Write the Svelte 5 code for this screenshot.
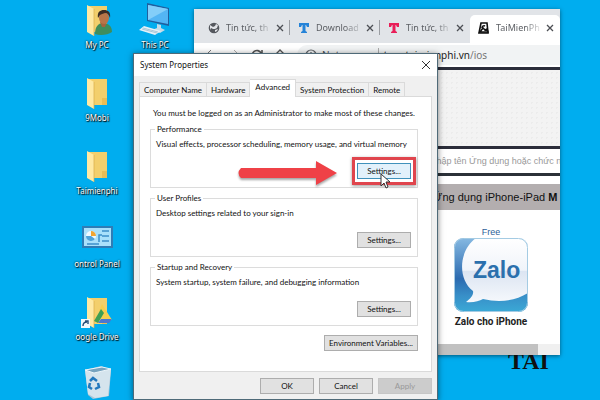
<script lang="ts">
  type Shortcut = { label: string; icon: string };

  const columns: Shortcut[][] = [
    [
      { label: 'My PC', icon: 'user' },
      { label: '9Mobi', icon: 'folder' },
      { label: 'Taimienphi', icon: 'folder' },
      { label: 'ontrol Panel', icon: 'control' },
      { label: 'oogle Drive', icon: 'drive' },
      { label: '', icon: 'bin' },
    ],
    [{ label: 'This PC', icon: 'monitor' }],
  ];

  const pages = [
    { title: 'Tin tức, th', icon: 'globe' },
    { title: 'Download', icon: 'blue' },
    { title: 'Tin tức, th', icon: 'pink' },
    { title: 'TaiMienPh', icon: 'site' },
  ];

  const tabs = ['Computer Name', 'Hardware', 'Advanced', 'System Protection', 'Remote'];

  const groups = [
    { title: 'Performance', text: 'Visual effects, processor scheduling, memory usage, and virtual memory' },
    { title: 'User Profiles', text: 'Desktop settings related to your sign-in' },
    { title: 'Startup and Recovery', text: 'System startup, system failure, and debugging information' },
  ];

  let activeTab = $state('Advanced');
  let activePage = $state(3);
</script>

{#snippet folder()}
  <path d="M10 3h20v26H10z" fill="#f3cf6c" />
  <path d="M25 22h5v7h-5z" fill="#e9bd55" />
  <path d="M10 2l7 4v27l-7-4z" fill="#ffe9a3" />
  <path d="M17 6v27" stroke="#d9ac48" stroke-width=".7" />
{/snippet}

<div class="desktop">
  <div class="shortcuts">
    {#each columns as column}
      <div class="shortcuts__column">
        {#each column as item}
          <a class="shortcut" href="#top" aria-label={item.label || 'Recycle Bin'}>
            <svg width="40" height="36" viewBox="0 0 40 36" fill="none" aria-hidden="true">
              {#if item.icon === 'user'}
                {@render folder()}
                <path d="M18 31c0-7 3-11 8-11s9 3 9 9c-4 3-12 4-17 2z" fill="#3f8d5c" />
                <path d="M23 19h7l-2 5h-3z" fill="#a5643d" />
                <ellipse cx="27" cy="15" rx="5" ry="6" fill="#b87549" />
                <path d="M21 15c-1-6 2-8 6-8s7 2 6 8c-1-3-2-5-5-5-2 1-4 1-5 2z" fill="#3b2c25" />
              {:else if item.icon === 'folder'}
                {@render folder()}
              {:else if item.icon === 'control'}
                <path d="M5 4h31v22H5z" fill="#2f7cb5" />
                <path d="M7 6h27v18H7z" fill="#a9e0fb" />
                <circle cx="14" cy="14" r="5" fill="#eef9ff" />
                <path d="M14 14V9a5 5 0 0 1 5 5z" fill="#f1a533" />
                <path d="M9 14a5 5 0 0 0 9 3l-4-3z" fill="#4ea3da" />
                <path d="M25 9h7M25 14h7M25 19h7M22 20v-7h3M10 22h12" stroke="#3d8fca" stroke-width="1.5" />
              {:else if item.icon === 'drive'}
                {@render folder()}
                <path d="M25 9l10 16H25l-3-9z" fill="#f7ce4e" />
                <path d="M17 26l7-12 3 4-6 10z" fill="#3e9f54" />
                <path d="M21 28l3-4h11l-3 4z" fill="#4a76d1" />
                <path d="M4 24h9v9H4z" fill="#f4f8fb" />
                <path d="M6 31c0-3 1-4 4-4M8 26h3v3" stroke="#274d77" stroke-width="1.4" />
              {:else if item.icon === 'monitor'}
                <path d="M12 0l22 5v18l-22-5z" fill="#205f9e" />
                <path d="M13 2l20 4v15l-20-4z" fill="#53b5f4" />
                <path d="M13 2l20 4-20 11z" fill="#83cef9" />
                <path d="M22 21v4l-5 2 8 3 5-3-4-2v-3z" fill="#c6dbe7" />
                <path d="M9 23l17 5-6 4L4 27z" fill="#e4f1f8" />
                <path d="M7 26l15 4M8 25l15 4" stroke="#8eb4ca" stroke-width=".7" />
              {:else}
                <path d="M8 2l16-4 10 4-2 26-16 3-5-4z" fill="#a9c7d9" />
                <path d="M8 2l9 3 17-4-3 27-13 2-7-4z" fill="#d5e4ed" />
                <path d="M8 2l9 3 17-4-9-2z" fill="#77a3bf" stroke="#edf6fb" />
                <path d="M13 13l3-3 4 3M21 15l1 4-4 2M15 21l-3-2 1-4" stroke="#2378bd" stroke-width="2.5" />
              {/if}
            </svg>
            <span>{item.label}</span>
          </a>
        {/each}
      </div>
    {/each}
  </div>

  <div class="wallpaper-mark">TAI</div>

  <section class="browser" aria-label="Browser">
    <div class="strip" role="tablist">
      {#each pages as page, i}
        <div class="page-tab" class:page-tab--active={activePage === i}>
          <button class="page-tab__open" role="tab" aria-selected={activePage === i} onclick={() => (activePage = i)}>
            <svg width="12" height="12" viewBox="0 0 12 12" fill="none" aria-hidden="true">
              {#if page.icon === 'globe'}
                <circle cx="6" cy="6" r="5.3" fill="#55585e" />
                <path d="M2 3l3 2 2-1 1-2 2 1-1 3-2 1H5L3 6 2 8zM7 8l3-1-1 2-2 1z" fill="#e2e4e8" />
              {:else if page.icon === 'site'}
                <path d="M3 1h6l1 10H1L3 1z" stroke="#111" stroke-width="1.6" />
                <path d="M7 4a2 2 0 0 0-3 2M2 10l3-4 2 2 2-1 1 3z" stroke="#111" stroke-width="1.5" />
              {:else}
                <path d="M1 1h10v4H9L8 3H7.500v6L9 10v1H3v-1l1.500-1V3H4L3 5H1z" fill={page.icon === 'blue' ? '#2583d8' : '#e91e58'} />
              {/if}
            </svg>
            <span class="page-tab__title">{page.title}</span>
          </button>
          <button class="page-tab__close" aria-label="Close tab">
            <svg width="8" height="8" viewBox="0 0 8 8"><path d="M1 1l6 6M7 1L1 7" stroke="#4c4f54" stroke-width="1.3" /></svg>
          </button>
        </div>
      {/each}
    </div>

    <div class="toolbar">
      <button aria-label="Back"><svg width="12" height="12" viewBox="0 0 12 12" fill="none"><path d="M11 6H1M6 1L1 6l5 5" stroke="#777" /></svg></button>
      <button aria-label="Forward"><svg width="12" height="12" viewBox="0 0 12 12" fill="none"><path d="M1 6h10M6 1l5 5-5 5" stroke="#aaa" /></svg></button>
      <button aria-label="Reload"><svg width="12" height="12" viewBox="0 0 12 12" fill="none"><path d="M10 8a4.500 4.500 0 1 1 0-4M11 1v4H7" stroke="#555" stroke-width="1.6" /></svg></button>
      <button aria-label="Home"><svg width="12" height="12" viewBox="0 0 12 12" fill="none"><path d="M0 7l6-6 6 6M2 6v5h8V6" stroke="#555" stroke-width="1.4" /></svg></button>
      <div class="omnibox">
        <svg width="12" height="12" viewBox="0 0 12 12" fill="none"><circle cx="6" cy="6" r="5" stroke="#5f6368" stroke-width="1.200" /><path d="M6 3v1M6 5v4" stroke="#5f6368" stroke-width="1.300" /></svg>
        <span class="omnibox__state">Not secure</span>
        <span class="omnibox__url">tmo.taimienphi.vn<span>/ios</span></span>
      </div>
    </div>

    <div class="banner"></div>
    <input class="search" type="text" aria-label="Search" placeholder="Nhập tên Ứng dụng hoặc chức năng" />
    <h2 class="heading">Ứng dụng iPhone-iPad <b>M</b></h2>
    <div class="apps">
      <a class="app" href="#zalo">
        <span class="app__price">Free</span>
        <svg width="74" height="74" viewBox="0 0 74 74" aria-hidden="true">
          <defs>
            <linearGradient id="tile" x1="0" y1="0" x2="0" y2="1">
              <stop offset="0" stop-color="#86b9e2" />
              <stop offset=".55" stop-color="#2c6bb0" />
              <stop offset=".78" stop-color="#388fc8" />
              <stop offset="1" stop-color="#3ba9d6" />
            </linearGradient>
            <linearGradient id="bubble" x1="0" y1="0" x2="0" y2="1">
              <stop offset="0" stop-color="#fff" />
              <stop offset=".5" stop-color="#f0f4fa" />
              <stop offset=".52" stop-color="#dce5f2" />
              <stop offset="1" stop-color="#f5f8fc" />
            </linearGradient>
            <clipPath id="tile-shape"><rect width="74" height="74" rx="9" /></clipPath>
          </defs>
          <g clip-path="url(#tile-shape)">
            <rect width="74" height="74" fill="url(#tile)" />
            <path d="M22 0C5 12 3 41 19 53c1 4-3 8-7 11 7 1 13-1 17-3 17 4 34 2 48-8V0z" fill="url(#bubble)" />
          </g>
          <rect x=".5" y=".5" width="73" height="73" rx="9" fill="none" stroke="#a4cbe3" />
          <text class="app__logo" x="19" y="40">Zalo</text>
        </svg>
        <span class="app__name">Zalo cho iPhone</span>
      </a>
    </div>
    <div class="scrollbar"><div class="scrollbar__thumb"></div></div>
  </section>

  <div class="dialog" role="dialog" aria-label="System Properties">
    <header class="dialog__title">
      <h1>System Properties</h1>
      <button aria-label="Close">
        <svg width="10" height="10" viewBox="0 0 10 10"><path d="M1 1l8 8M9 1L1 9" stroke="#333" /></svg>
      </button>
    </header>

    <div class="tabs" role="tablist">
      {#each tabs as tab}
        <button class="tab" class:tab--active={activeTab === tab} role="tab" aria-selected={activeTab === tab} onclick={() => (activeTab = tab)}>{tab}</button>
      {/each}
    </div>

    <div class="panel" role="tabpanel">
      <p class="panel__note">You must be logged on as an Administrator to make most of these changes.</p>
      <div class="groups">
        {#each groups as group, i}
          <fieldset>
            <legend>{group.title}</legend>
            <p>{group.text}</p>
            <div class="group__action">
              <button class="btn" class:btn--hover={i === 0}>Settings...</button>
              {#if i === 0}
                <svg class="arrow" width="104" height="30" viewBox="0 0 104 30" aria-hidden="true">
                  <path d="M6 10h75V3l21 12-21 12v-7H6q-5-5 0-10z" fill="#ef4147" />
                </svg>
                <div class="highlight"></div>
                <svg class="cursor" width="11" height="17" viewBox="0 0 11 17" aria-hidden="true">
                  <path d="M1 1v12l3-3 2 5 2-1-2-5h4z" fill="#fff" stroke="#333" />
                </svg>
              {/if}
            </div>
          </fieldset>
        {/each}
      </div>
      <div class="panel__extra">
        <button class="btn btn--wide">Environment Variables...</button>
      </div>
    </div>

    <footer class="dialog__actions">
      <button class="btn">OK</button>
      <button class="btn">Cancel</button>
      <button class="btn" disabled>Apply</button>
    </footer>
  </div>
</div>

<style>
  :global(body) {
    margin: 0;
  }
  .desktop {
    position: relative;
    height: 100vh;
    overflow: hidden;
    background: #00adef;
    font-family: Lato, "Liberation Sans", sans-serif;
    font-size: 8px;
    color: #111;
  }
  .desktop :where(button) {
    border: 0;
    padding: 0;
    background: none;
    font: inherit;
    color: inherit;
  }
  .desktop :where(p, h1, h2, fieldset) {
    margin: 0;
    font-size: inherit;
    font-weight: 400;
  }
  svg {
    display: block;
    flex: none;
  }

  /* desktop */
  .shortcuts {
    display: flex;
    padding: 3px 0 0 68px;
  }
  .shortcuts__column {
    width: 58px;
  }
  .shortcut {
    display: flex;
    flex-direction: column;
    align-items: center;
    height: 73px;
    color: #fff;
    font-family: "Noto Sans", sans-serif;
    line-height: 11px;
    white-space: nowrap;
    text-decoration: none;
    text-shadow: 0 0 2px #000, 1px 1px 1px #000;
  }
  .shortcut svg {
    overflow: visible;
  }
  .wallpaper-mark {
    position: absolute;
    left: 508px;
    top: 349px;
    font: bold 24px/24px "Liberation Serif", serif;
    color: #111;
  }

  /* browser */
  .browser {
    position: absolute;
    left: 194px;
    right: 40px;
    top: 9px;
    overflow: hidden;
    background: #fff;
    box-shadow: 0 1px 4px rgba(0, 0, 0, 0.5);
    font-family: "Liberation Sans", Arial, sans-serif;
  }
  .strip {
    display: flex;
    padding: 6px 0 0 6px;
    background: #e1e4e8;
  }
  .page-tab {
    flex: 1;
    min-width: 0;
    display: flex;
    align-items: center;
    gap: 3px;
    height: 28px;
    padding: 0 6px 2px 8px;
    box-sizing: border-box;
    background: linear-gradient(#9a9da2, #9a9da2) right 5px / 1px 15px no-repeat;
  }
  .page-tab:nth-last-child(2) {
    background: none;
  }
  .page-tab--active {
    border-radius: 5px 5px 0 0;
    background: #fff;
  }
  .page-tab .page-tab__open {
    flex: 1;
    min-width: 0;
    display: flex;
    align-items: center;
    gap: 6px;
  }
  .page-tab__title {
    flex: 1;
    font: 9px/14px "Noto Sans", sans-serif;
    color: #5c5f64;
    text-align: left;
    white-space: nowrap;
    mask-image: linear-gradient(90deg, #000 60%, transparent);
  }
  .toolbar {
    display: flex;
    align-items: center;
    gap: 11px;
    height: 24px;
    padding-left: 11px;
  }
  .omnibox {
    flex: 1;
    display: flex;
    align-items: center;
    gap: 5px;
    height: 20px;
    padding-left: 8px;
    border-radius: 10px 0 0 10px;
    background: #f1f3f4;
    font: 10px/14px "Noto Sans", sans-serif;
    color: #45484c;
  }
  .omnibox__state {
    padding-right: 5px;
    border-right: 1px solid #aaa;
  }
  .omnibox__url {
    color: #222;
  }
  .omnibox__url span {
    color: #777;
  }
  .banner {
    height: 76px;
    border: solid #2b2d3a;
    border-width: 3px 0;
    background:
      radial-gradient(#ececec 1px, transparent 1px) 0 0 / 5px 5px,
      #f3f3f3;
  }
  .search {
    display: block;
    width: 100%;
    height: 27px;
    box-sizing: border-box;
    padding: 0 0 0 236px;
    border: 0;
    border-bottom: 3px solid #2b3138;
    border-radius: 0;
    outline: 0;
    background: #fff;
    font: 9px/14px "Liberation Sans", Arial, sans-serif;
  }
  .search::placeholder {
    color: #999;
  }
  .heading {
    margin-top: 8px;
    padding-left: 239px;
    background: #b3aeaf;
    font-size: 11px;
    line-height: 26px;
    white-space: nowrap;
  }
  .apps {
    display: flex;
    height: 134px;
    padding-left: 252px;
  }
  .app {
    display: flex;
    flex-direction: column;
    align-items: center;
    width: 90px;
    padding-top: 16px;
    color: #222;
    text-decoration: none;
  }
  .app__price {
    font-size: 9px;
    line-height: 12px;
    color: #2d5f97;
  }
  .app__logo {
    font: bold 23px "Liberation Sans", Arial, sans-serif;
    fill: #2b70ad;
  }
  .app__name {
    padding-top: 3px;
    font-family: Roboto, sans-serif;
    font-size: 10px;
    font-weight: 700;
    line-height: 14px;
    white-space: nowrap;
  }
  .scrollbar {
    padding-right: 22px;
    background: #f0f0f0;
  }
  .scrollbar__thumb {
    height: 11px;
    background: #c1c1c1;
  }

  /* system properties */
  .dialog {
    position: absolute;
    left: 133px;
    right: 162px;
    top: 53px;
    border: 1px solid #4f6a78;
    background: #f0f0f0;
    box-shadow: 0 1px 6px rgba(0, 0, 0, 0.5);
  }
  .dialog__title {
    display: flex;
    align-items: center;
    justify-content: space-between;
    height: 22px;
    padding: 0 6px;
    background: #fff;
  }
  .dialog__title h1 {
    font-family: "Noto Sans", sans-serif;
    line-height: 12px;
  }
  .tabs {
    display: flex;
    align-items: flex-end;
    height: 20px;
    padding: 0 5px;
  }
  .tabs .tab {
    height: 14px;
    padding: 0 4px;
    border: 1px solid #dadada;
    border-width: 1px 1px 0 0;
    line-height: 12px;
    white-space: nowrap;
  }
  .tabs .tab:first-child {
    border-left-width: 1px;
  }
  .tabs .tab--active {
    height: 18px;
    margin-bottom: -1px;
    padding: 0 5px 4px;
    background: #fff;
  }
  .panel {
    margin: 0 5px;
    padding: 10px 13px 20px 10px;
    border: 1px solid #dadada;
    background: #fff;
  }
  .panel__note {
    padding: 0 0 5px 3px;
    line-height: 12px;
    white-space: nowrap;
  }
  .groups {
    display: flex;
    flex-direction: column;
    gap: 5px;
  }
  fieldset {
    min-width: 0;
    padding: 5px 6px 8px 5px;
    border: 1px solid #dcdcdc;
  }
  legend {
    padding: 0 2px;
    margin-left: -1px;
    line-height: 10px;
  }
  fieldset p {
    line-height: 10px;
    white-space: nowrap;
  }
  .group__action {
    position: relative;
    display: flex;
    justify-content: flex-end;
    margin-top: 14px;
  }
  .dialog .btn {
    width: 54px;
    height: 16px;
    border: 1px solid #adadad;
    background: #e1e1e1;
    line-height: 14px;
    white-space: nowrap;
  }
  .dialog .btn--wide {
    width: 94px;
  }
  .dialog .btn--hover {
    border-color: #3f91bb;
    background: #e2f1fb;
  }
  .dialog .btn:disabled {
    border-color: #c6c6c6;
    background: #ccc;
    color: #999;
  }
  .arrow {
    position: absolute;
    right: 72px;
    top: -5px;
    filter: drop-shadow(0 2px 1px rgba(0, 0, 0, 0.35));
  }
  .highlight {
    position: absolute;
    right: -5px;
    top: -6px;
    width: 58px;
    height: 22px;
    border: 3px solid #e0454d;
    box-shadow: 0 1px 3px rgba(0, 0, 0, 0.4);
    pointer-events: none;
  }
  .cursor {
    position: absolute;
    right: 20px;
    top: 10px;
  }
  .panel__extra {
    display: flex;
    justify-content: flex-end;
    margin-top: 9px;
  }
  .dialog__actions {
    display: flex;
    justify-content: flex-end;
    gap: 5px;
    padding: 6px 5px 5px;
  }
</style>
